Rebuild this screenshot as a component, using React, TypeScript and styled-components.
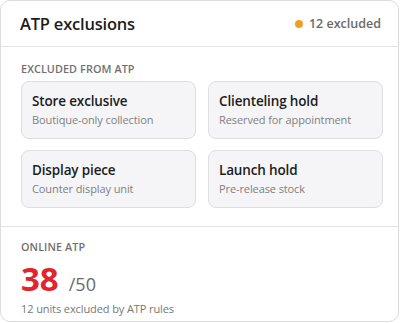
import React from 'react';
import styled, { createGlobalStyle } from 'styled-components';

const GlobalStyle = createGlobalStyle`
  html, body {
    margin: 0;
    padding: 0;
    background: #ffffff;
  }
  body {
    font-family: 'Open Sans', 'Noto Sans', 'Liberation Sans', sans-serif;
    -webkit-font-smoothing: antialiased;
  }
`;

type Exclusion = {
  title: string;
  note: string;
};

const exclusions: Exclusion[] = [
  { title: 'Store exclusive', note: 'Boutique-only collection' },
  { title: 'Clienteling hold', note: 'Reserved for appointment' },
  { title: 'Display piece', note: 'Counter display unit' },
  { title: 'Launch hold', note: 'Pre-release stock' },
];

const App = () => {
  const total = 50;
  const excluded = 12;
  const available = total - excluded;

  return (
    <>
      <GlobalStyle />
      <Card>
        <Header>
          <Title>ATP exclusions</Title>
          <Status>
            <Dot />
            {excluded} excluded
          </Status>
        </Header>
        <Body>
          <SectionLabel>Excluded from ATP</SectionLabel>
          <TileGrid>
            {exclusions.map((item) => (
              <Tile key={item.title}>
                <TileTitle>{item.title}</TileTitle>
                <TileNote>{item.note}</TileNote>
              </Tile>
            ))}
          </TileGrid>
        </Body>
        <Footer>
          <SectionLabel>Online ATP</SectionLabel>
          <Figure>
            <Count>{available}</Count>
            <Total>/{total}</Total>
          </Figure>
          <Caption>{excluded} units excluded by ATP rules</Caption>
        </Footer>
      </Card>
    </>
  );
};

const Card = styled.div`
  box-sizing: border-box;
  width: 399px;
  height: 322px;
  border: 1px solid #dcdcdc;
  border-radius: 10px;
  background: #ffffff;
  overflow: hidden;
  display: flex;
  flex-direction: column;
`;

const Header = styled.div`
  height: 45px;
  display: flex;
  align-items: center;
  justify-content: space-between;
  padding: 0 17px 0 19px;
  border-bottom: 1px solid #e3e3e3;
`;

const Title = styled.h2`
  margin: 0;
  font-size: 16.5px;
  font-weight: 600;
  line-height: 24px;
  letter-spacing: -0.2px;
  color: #1c1c1c;
`;

const Status = styled.div`
  display: flex;
  align-items: center;
  gap: 6px;
  font-size: 12.5px;
  font-weight: 600;
  color: #6a6a6a;
`;

const Dot = styled.span`
  width: 8px;
  height: 8px;
  border-radius: 50%;
  background: #f0a020;
`;

const Body = styled.div`
  padding: 15px 15px 18px 20px;
  border-bottom: 1px solid #e3e3e3;
`;

const SectionLabel = styled.div`
  font-size: 10.8px;
  line-height: 14px;
  font-weight: 600;
  letter-spacing: 0.1px;
  text-transform: uppercase;
  color: #707070;
`;

const TileGrid = styled.div`
  margin-top: 5px;
  display: grid;
  grid-template-columns: 1fr 1fr;
  column-gap: 12px;
  row-gap: 11px;
`;

const Tile = styled.div`
  box-sizing: border-box;
  height: 58px;
  padding: 10px 10px;
  border: 1px solid #dedede;
  border-radius: 8px;
  background: #f5f5f7;
`;

const TileTitle = styled.div`
  font-size: 13.5px;
  line-height: 19px;
  font-weight: 600;
  letter-spacing: -0.15px;
  color: #1c1c1c;
`;

const TileNote = styled.div`
  margin-top: 1px;
  font-size: 11px;
  line-height: 16px;
  letter-spacing: -0.1px;
  color: #808080;
`;

const Footer = styled.div`
  padding: 13px 20px 0;
`;

const Figure = styled.div`
  margin-top: 5px;
  display: flex;
  align-items: baseline;
  gap: 10px;
`;

const Count = styled.span`
  font-size: 33px;
  line-height: 40px;
  font-weight: 700;
  color: #e2242b;
`;

const Total = styled.span`
  font-size: 18px;
  color: #6a6a6a;
`;

const Caption = styled.div`
  margin-top: 2px;
  font-size: 11px;
  line-height: 16px;
  letter-spacing: -0.1px;
  color: #777777;
`;

export default App;
